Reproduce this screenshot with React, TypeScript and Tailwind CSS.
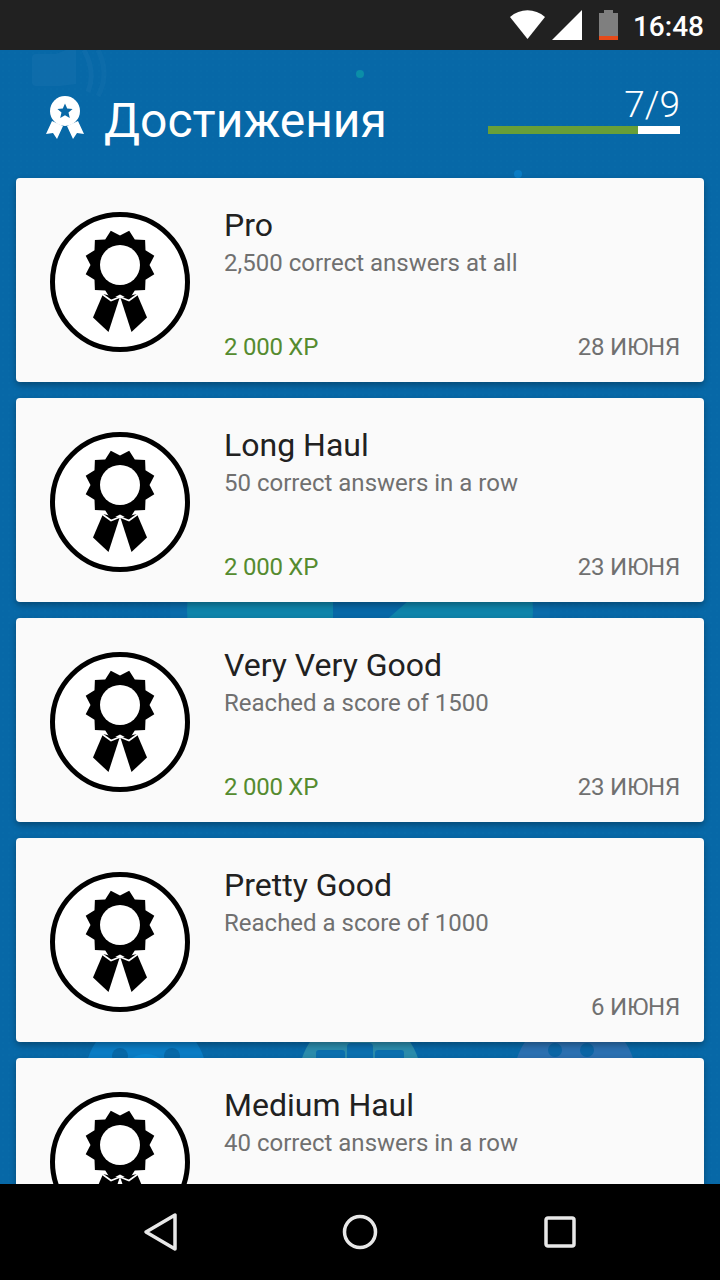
const rosette = Array.from({ length: 24 }, (_, i) => {
  const r = i % 2 === 0 ? 35.5 : 29.5;
  const a = (i * 15 + 15) * (Math.PI / 180);
  return `${(70 + r * Math.sin(a)).toFixed(1)},${(53 - r * Math.cos(a)).toFixed(1)}`;
}).join(" ");

const Medal = () => (
  <svg viewBox="0 0 140 140" className="h-[140px] w-[140px] shrink-0">
    <circle cx="70" cy="70" r="67.5" fill="#fff" stroke="#000" strokeWidth="5" />
    <polygon points={rosette} fill="#000" />
    <circle cx="70" cy="53" r="20" fill="#fff" />
    <polygon points="53,82 43,105.5 58.5,120 69.5,86" fill="#000" />
    <polygon points="87,82 97,105.5 81.5,120 70.5,86" fill="#000" />
    <polyline points="52,82 61,88.5 70,85 79,88.5 88,82" fill="none" stroke="#fff" strokeWidth="1.6" />
  </svg>
);

const achievements = [
  { title: "Pro", text: "2,500 correct answers at all", xp: "2 000 XP", date: "28 ИЮНЯ" },
  { title: "Long Haul", text: "50 correct answers in a row", xp: "2 000 XP", date: "23 ИЮНЯ" },
  { title: "Very Very Good", text: "Reached a score of 1500", xp: "2 000 XP", date: "23 ИЮНЯ" },
  { title: "Pretty Good", text: "Reached a score of 1000", xp: "", date: "6 ИЮНЯ" },
  { title: "Medium Haul", text: "40 correct answers in a row", xp: "", date: "" },
];

const Card = ({ item }: { item: (typeof achievements)[number] }) => (
  <div className="flex h-[204px] shrink-0 rounded-[4px] bg-[#fafafa] pl-[34px] pr-6 pt-[34px] shadow-[0_3px_6px_rgba(0,0,0,0.3)]">
    <Medal />
    <div className="ml-[34px] flex min-w-0 flex-1 flex-col">
      <div className="-mt-[11px] text-[32px] leading-[48px] text-[#212121]">{item.title}</div>
      <div className="text-2xl leading-[28px] text-[#707070]">{item.text}</div>
      <div className="mt-[52px] flex h-[36px] items-center justify-between text-2xl tracking-[-0.25px]">
        <span className="text-[#558b2f]">{item.xp}</span>
        <span className="text-[#707070]">{item.date}</span>
      </div>
    </div>
  </div>
);

export default function App() {
  return (
    <div className="flex h-[1280px] w-[720px] flex-col overflow-hidden bg-black font-['Roboto',sans-serif]">
      <div className="flex h-[50px] shrink-0 items-center justify-end bg-[#212121] pr-4">
        <svg viewBox="0 0 35 30" className="h-[30px] w-[35px]">
          <path d="M0 7 C10 -2 25 -2 35 7 L17.5 29 Z" fill="#fff" />
        </svg>
        <svg viewBox="0 0 30 30" className="ml-[7px] h-[30px] w-[30px]">
          <path d="M0 30 L30 0 V30 Z" fill="#fff" />
        </svg>
        <svg viewBox="0 0 19 30" className="ml-[17px] h-[30px] w-[19px]">
          <path d="M0 3 H5 V0 H14 V3 H19 V26 H0 Z" fill="#7f7f7f" />
          <rect x="0" y="26" width="19" height="4" fill="#e64a19" />
        </svg>
        <span className="ml-[15px] mt-[3px] text-[28px] font-medium leading-none text-white">16:48</span>
      </div>

      <div className="relative min-h-0 flex-1 overflow-hidden bg-[#0768a7] bg-[radial-gradient(#086aa8_1px,transparent_1px)] bg-[length:6px_6px]">
        <svg className="absolute left-0 top-0 h-[1134px] w-[720px]" viewBox="0 0 720 1134">
          <path d="M32 8 Q32 4 36 4 H56 L76 -4 V34 L60 36 H36 Q32 36 32 32 Z" fill="#1a74ae" opacity="0.4" />
          <path d="M84 0 Q96 22 88 42" fill="none" stroke="#1a74ae" strokeWidth="5" opacity="0.4" />
          <path d="M98 0 Q110 24 98 46" fill="none" stroke="#1a74ae" strokeWidth="5" opacity="0.3" />
          <circle cx="360" cy="24" r="4" fill="#0b8ea8" />
          <circle cx="518" cy="124" r="4" fill="#0a7cc4" />

          <circle cx="360" cy="560" r="190" fill="#0a6cab" />
          <circle cx="360" cy="560" r="173" fill="#0e84aa" />
          <path d="M333 530 H432 L375 580 H333 Z" fill="#0768a7" />

          <circle cx="146" cy="1027" r="61" fill="#0a7cc4" />
          <circle cx="146" cy="1030" r="26" fill="#0a86d0" />
          <circle cx="120" cy="1006" r="8" fill="#0768a7" />
          <circle cx="172" cy="1006" r="8" fill="#0768a7" />

          <circle cx="360" cy="1027" r="61" fill="#2a8bab" />
          <rect x="316" y="1000" width="29" height="30" rx="3" fill="#0b6fae" />
          <rect x="347" y="993" width="26" height="20" rx="4" fill="#0b6fae" />
          <rect x="375" y="1000" width="29" height="30" rx="3" fill="#0b6fae" />

          <circle cx="575" cy="1027" r="61" fill="#2a6fb0" />
          <circle cx="555" cy="1000" r="7" fill="#0b65a5" />
          <circle cx="587" cy="1000" r="7" fill="#0b65a5" />
        </svg>

        <div className="relative flex h-[128px] items-start pl-[46px] pr-10">
          <svg viewBox="0 0 38 44" className="mt-[46px] h-[44px] w-[38px] shrink-0">
            <path d="M6 25 L0 38 L7 37 L11 43 L17 30 Z" fill="#fff" />
            <path d="M32 25 L38 38 L31 37 L27 43 L21 30 Z" fill="#fff" />
            <circle cx="19" cy="15" r="15" fill="#fff" />
            <path
              d="M19 7.5 L21.2 12.6 L26.6 13 L22.5 16.6 L23.8 22 L19 19.2 L14.2 22 L15.5 16.6 L11.4 13 L16.8 12.6 Z"
              fill="#0768a7"
            />
          </svg>
          <h1 className="ml-[20px] mt-[47px] text-[48px] font-normal leading-none text-white">Достижения</h1>
          <div className="ml-auto mt-[35px] flex w-[192px] flex-col items-end">
            <div className="text-[37px] font-light leading-[40px] text-white">7/9</div>
            <div className="mt-[1px] flex h-2 w-full bg-white">
              <div className="w-[150px] bg-[#689f38]" />
            </div>
          </div>
        </div>

        <div className="relative flex flex-col gap-4 px-4">
          {achievements.map((item) => (
            <Card key={item.title} item={item} />
          ))}
        </div>
      </div>

      <div className="flex h-[96px] shrink-0 items-center justify-center bg-black">
        <div className="grid w-[600px] grid-cols-3 justify-items-center">
          <svg viewBox="0 0 36 40" className="h-[40px] w-[36px]">
            <path d="M33 3 V37 L4 20 Z" fill="none" stroke="#e8e8e8" strokeWidth="3.5" strokeLinejoin="round" />
          </svg>
          <svg viewBox="0 0 36 36" className="mt-[2px] h-[36px] w-[36px]">
            <circle cx="18" cy="18" r="15.5" fill="none" stroke="#e8e8e8" strokeWidth="3.5" />
          </svg>
          <svg viewBox="0 0 32 32" className="mt-[4px] h-[32px] w-[32px]">
            <rect x="2" y="2" width="28" height="28" rx="2" fill="none" stroke="#e8e8e8" strokeWidth="3.5" />
          </svg>
        </div>
      </div>
    </div>
  );
}
